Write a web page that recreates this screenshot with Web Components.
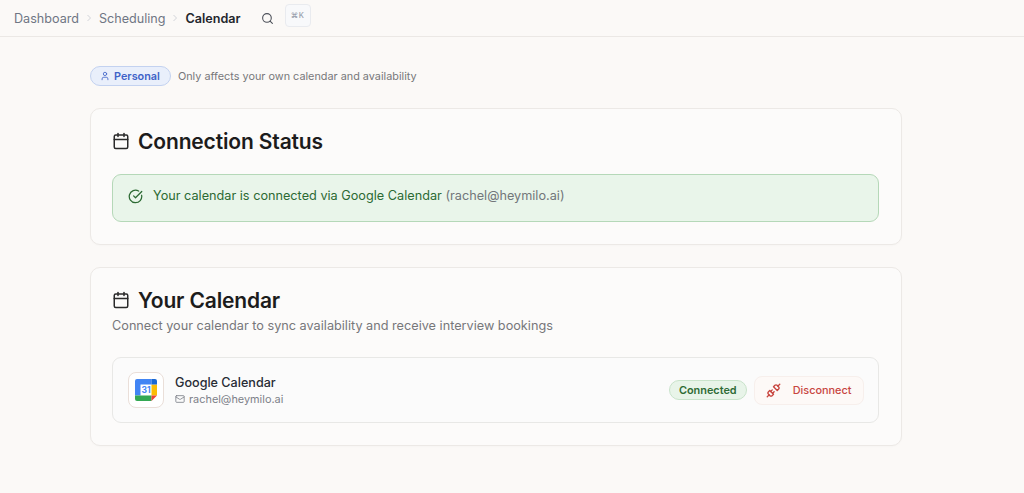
<!DOCTYPE html>
<html lang="en">
<head>
<meta charset="utf-8">
<title>Calendar</title>
<style>
    html, body { margin: 0; padding: 0; height: 100%; overflow: hidden; }
    body { background: #fbf9f7; font-family: Inter, "Liberation Sans", sans-serif; color: #1c1c1c; }
</style>
</head>
<body>
<app-topbar></app-topbar>
<app-page>
    <scope-note>Only affects your own calendar and availability</scope-note>
    <app-card heading="Connection Status">
        <status-alert email="(rachel@heymilo.ai)">Your calendar is connected via Google Calendar</status-alert>
    </app-card>
    <app-card heading="Your Calendar" subtitle="Connect your calendar to sync availability and receive interview bookings">
        <calendar-row name="Google Calendar" email="rachel@heymilo.ai"></calendar-row>
    </app-card>
</app-page>

<script>
const calendarIcon = (size) => `
    <svg width="${size}" height="${size}" viewBox="0 0 24 24" fill="none" stroke="currentColor" stroke-width="2" stroke-linecap="round" stroke-linejoin="round">
        <path d="M8 2v4"></path><path d="M16 2v4"></path>
        <rect x="3" y="4" width="18" height="18" rx="2"></rect>
        <path d="M3 10h18"></path>
    </svg>`;

class AppTopbar extends HTMLElement {
    constructor() {
        super();
        this.attachShadow({ mode: 'open' });
    }

    connectedCallback() {
        this.shadowRoot.innerHTML = `
            <style>
                :host {
                    display: flex;
                    align-items: center;
                    height: 36px;
                    padding-left: 14px;
                    border-bottom: 1px solid #ebe8e5;
                    font-size: 12.6px;
                    color: #6f7684;
                }
                .sep { display: flex; margin: 0 6px; color: #d3d5da; }
                .current { color: #23262d; font-weight: 600; }
                .search { display: flex; margin-left: 20px; color: #4c5059; }
                kbd {
                    display: flex;
                    align-items: center;
                    justify-content: center;
                    box-sizing: border-box;
                    width: 26px;
                    height: 23px;
                    margin-left: 11px;
                    margin-top: -6px;
                    border: 1px solid #e9ebef;
                    border-radius: 4px;
                    background: #f8f9fb;
                    font: 500 7.5px Inter, sans-serif;
                    letter-spacing: .5px;
                    color: #98a0ad;
                }
            </style>
            <span>Dashboard</span>
            <span class="sep"><svg width="8" height="8" viewBox="0 0 8 8" fill="none" stroke="currentColor" stroke-width="1"><path d="M2.5 1l3 3-3 3"></path></svg></span>
            <span>Scheduling</span>
            <span class="sep"><svg width="8" height="8" viewBox="0 0 8 8" fill="none" stroke="currentColor" stroke-width="1"><path d="M2.5 1l3 3-3 3"></path></svg></span>
            <span class="current">Calendar</span>
            <span class="search"><svg width="13" height="13" viewBox="0 0 24 24" fill="none" stroke="currentColor" stroke-width="2" stroke-linecap="round"><circle cx="11" cy="11" r="8"></circle><path d="M21 21l-4.3-4.3"></path></svg></span>
            <kbd>⌘K</kbd>
        `;
    }
}

class AppPage extends HTMLElement {
    constructor() {
        super();
        this.attachShadow({ mode: 'open' });
    }

    connectedCallback() {
        this.shadowRoot.innerHTML = `
            <style>
                :host {
                    display: flex;
                    flex-direction: column;
                    gap: 22px;
                    width: 811.5px;
                    margin-left: 90px;
                    padding-top: 29px;
                }
            </style>
            <slot></slot>
        `;
    }
}

class ScopeNote extends HTMLElement {
    constructor() {
        super();
        this.attachShadow({ mode: 'open' });
    }

    connectedCallback() {
        this.shadowRoot.innerHTML = `
            <style>
                :host {
                    display: flex;
                    align-items: center;
                    gap: 7px;
                    height: 20px;
                    font-size: 10.85px;
                    color: #77777a;
                }
                .badge {
                    display: flex;
                    align-items: center;
                    gap: 4px;
                    box-sizing: border-box;
                    height: 20px;
                    padding: 0 10px 0 9px;
                    border: 1px solid #c3d2f0;
                    border-radius: 10px;
                    background: #e9effb;
                    font-weight: 600;
                    color: #3f63c8;
                }
            </style>
            <span class="badge">
                <svg width="10" height="10" viewBox="0 0 24 24" fill="none" stroke="currentColor" stroke-width="2" stroke-linecap="round" stroke-linejoin="round"><path d="M19 21v-2a4 4 0 0 0-4-4H9a4 4 0 0 0-4 4v2"></path><circle cx="12" cy="7" r="4"></circle></svg>
                Personal
            </span>
            <span><slot></slot></span>
        `;
    }
}

class AppCard extends HTMLElement {
    constructor() {
        super();
        this.attachShadow({ mode: 'open' });
    }

    connectedCallback() {
        const subtitle = this.getAttribute('subtitle');
        this.shadowRoot.innerHTML = `
            <style>
                :host {
                    display: block;
                    box-sizing: border-box;
                    padding: 20px 22px 22px 21px;
                    border: 1px solid #ece9e6;
                    border-radius: 10px;
                    background: #fcfbfa;
                    box-shadow: 0 1px 2px rgba(0, 0, 0, .02);
                }
                h2 {
                    display: flex;
                    align-items: center;
                    gap: 8px;
                    height: 24px;
                    margin: 0;
                    font-size: 21px;
                    font-weight: 600;
                    letter-spacing: -.15px;
                    color: #1c1c1c;
                }
                p { margin: 5px 0 0; font-size: 12.7px; line-height: 18px; color: #77777a; }
                .body { margin-top: 21px; }
                :host([subtitle]) .body { margin-top: 22px; }
                svg { flex: none; color: #2a2a2a; }
            </style>
            <h2>${calendarIcon(18)}${this.getAttribute('heading')}</h2>
            ${subtitle ? `<p>${subtitle}</p>` : ''}
            <div class="body"><slot></slot></div>
        `;
    }
}

class StatusAlert extends HTMLElement {
    constructor() {
        super();
        this.attachShadow({ mode: 'open' });
    }

    connectedCallback() {
        this.shadowRoot.innerHTML = `
            <style>
                :host {
                    display: flex;
                    align-items: center;
                    gap: 10px;
                    box-sizing: border-box;
                    height: 48px;
                    padding: 0 15px 6px;
                    border: 1px solid #b5d8b8;
                    border-radius: 9px;
                    background: #e9f5ea;
                    font-size: 12.7px;
                    color: #2c6a33;
                }
                svg { margin-top: 2px; }
                .email { color: #72777a; }
            </style>
            <svg width="15" height="15" viewBox="0 0 24 24" fill="none" stroke="currentColor" stroke-width="2" stroke-linecap="round" stroke-linejoin="round"><path d="M21.8 10A10 10 0 1 1 17 3.3"></path><path d="M9 11l3 3L22 4"></path></svg>
            <span><slot></slot> <span class="email">${this.getAttribute('email')}</span></span>
        `;
    }
}

class CalendarRow extends HTMLElement {
    constructor() {
        super();
        this.attachShadow({ mode: 'open' });
    }

    connectedCallback() {
        this.shadowRoot.innerHTML = `
            <style>
                :host {
                    display: flex;
                    align-items: center;
                    box-sizing: border-box;
                    height: 66px;
                    padding: 0 14px 0 15px;
                    border: 1px solid #e8e8e6;
                    border-radius: 9px;
                    background: #fbfbfb;
                }
                .logo {
                    display: flex;
                    align-items: center;
                    justify-content: center;
                    box-sizing: border-box;
                    width: 36px;
                    height: 36px;
                    border: 1px solid #eadfd9;
                    border-radius: 8px;
                    background: #fff;
                }
                .info { margin-left: 11px; flex: 1; }
                .name { font-size: 12.6px; font-weight: 500; line-height: 16px; color: #282c35; }
                .mail {
                    display: flex;
                    align-items: center;
                    gap: 4px;
                    margin-top: 1px;
                    font-size: 10.9px;
                    line-height: 14px;
                    color: #7d8189;
                }
                .pill {
                    display: flex;
                    align-items: center;
                    box-sizing: border-box;
                    height: 20px;
                    padding: 0 9px;
                    border: 1px solid #c9e3cb;
                    border-radius: 10px;
                    background: #e8f4e9;
                    font-size: 10.9px;
                    font-weight: 600;
                    color: #2f6b36;
                }
                .disconnect {
                    display: flex;
                    align-items: center;
                    gap: 12px;
                    box-sizing: border-box;
                    height: 29px;
                    margin-left: 7px;
                    padding: 0 11px;
                    border: 1px solid #f7efec;
                    border-radius: 8px;
                    background: #fdf9f7;
                    font: 500 10.9px Inter, sans-serif;
                    color: #c8453f;
                }
            </style>
            <span class="logo">
                <svg width="22" height="22" viewBox="0 0 22 22">
                    <rect x="0" y="0" width="22" height="22" rx="2" fill="#fff"></rect>
                    <path d="M2 0h14.5v5.5H5.5v11H0V2a2 2 0 0 1 2-2z" fill="#4285f4"></path>
                    <path d="M16.5 5.5H22v11h-5.5z" fill="#fbbc04"></path>
                    <path d="M0 16.5h16.5V22H2a2 2 0 0 1-2-2z" fill="#34a853"></path>
                    <path d="M16.5 16.5H22L16.5 22z" fill="#ea4335"></path>
                    <path d="M16.5 0H20a2 2 0 0 1 2 2v3.5h-5.5z" fill="#1967d2"></path>
                    <text x="11" y="14.3" text-anchor="middle" font-family="Inter, sans-serif" font-size="8.5" font-weight="700" fill="#4285f4">31</text>
                </svg>
            </span>
            <div class="info">
                <div class="name">${this.getAttribute('name')}</div>
                <div class="mail">
                    <svg width="10" height="10" viewBox="0 0 24 24" fill="none" stroke="currentColor" stroke-width="2" stroke-linecap="round" stroke-linejoin="round"><rect x="2" y="4" width="20" height="16" rx="2"></rect><path d="M22 7l-8.97 5.7a1.94 1.94 0 0 1-2.06 0L2 7"></path></svg>
                    ${this.getAttribute('email')}
                </div>
            </div>
            <span class="pill">Connected</span>
            <button class="disconnect">
                <svg width="15" height="15" viewBox="0 0 24 24" fill="none" stroke="currentColor" stroke-width="2.2" stroke-linecap="round" stroke-linejoin="round"><path d="M19 5l3-3"></path><path d="M2 22l3-3"></path><path d="M6.3 20.3a2.4 2.4 0 0 0 3.4 0L12 18l-6-6-2.3 2.3a2.4 2.4 0 0 0 0 3.4z"></path><path d="M7.5 13.5L10 11"></path><path d="M10.5 16.5L13 14"></path><path d="M12 6l6 6 2.3-2.3a2.4 2.4 0 0 0 0-3.4l-2.6-2.6a2.4 2.4 0 0 0-3.4 0z"></path></svg>
                Disconnect
            </button>
        `;
    }
}

customElements.define('app-topbar', AppTopbar);
customElements.define('app-page', AppPage);
customElements.define('scope-note', ScopeNote);
customElements.define('app-card', AppCard);
customElements.define('status-alert', StatusAlert);
customElements.define('calendar-row', CalendarRow);
</script>
</body>
</html>
